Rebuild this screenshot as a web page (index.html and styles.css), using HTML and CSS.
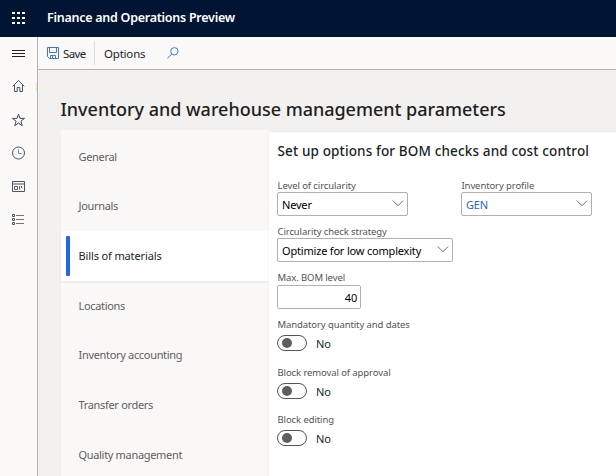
FILE: index.html
```
<!DOCTYPE html>
<html lang="en">
<head>
<meta charset="utf-8">
<title>Finance and Operations Preview</title>
<link rel="stylesheet" href="styles.css">
</head>
<body>
<header class="topbar">
  <svg class="waffle" width="14" height="14" viewBox="0 0 14 14" fill="#fff"><path d="M0 1h3v2H0zM5 1h3v2H5zM10 1h3v2h-3zM0 6h3v2H0zM5 6h3v2H5zM10 6h3v2h-3zM0 11h3v2H0zM5 11h3v2H5zM10 11h3v2h-3z"/></svg>
  <span class="brand">Finance and Operations Preview</span>
</header>
<div class="shell">
  <nav class="rail">
    <svg class="menu" width="14" height="14" viewBox="0 0 14 14" fill="#222"><path d="M0 3h13v1H0zM0 6h13v1H0zM0 9h13v1H0z"/></svg>
    <svg width="14" height="14" viewBox="0 0 14 14" fill="none" stroke="#4b5563"><path d="M.7 7.300 6.500 1.500l5.800 5.800M2.500 6v6.500h2.700V8.500h2.600v4h2.700V6"/></svg>
    <svg width="14" height="14" viewBox="0 0 14 14" fill="none" stroke="#3f4855"><path d="m6.500 1.200 1.500 4.200h4.500L8.900 8.200l1.300 4.500-3.700-2.700-3.700 2.700 1.300-4.500L.5 5.400H5z"/></svg>
    <svg width="14" height="14" viewBox="0 0 14 14" fill="none" stroke="#4b5563"><circle cx="6.500" cy="7" r="6"/><path d="M6.500 3.500v4h3" stroke="#6f90ac"/></svg>
    <svg width="14" height="14" viewBox="0 0 14 14" fill="none" stroke="#4f5563"><path d="M.5 1.500h12v10H.5zM.5 4h12"/><path d="M2.500 6.500h3v3h-3zM7.500 6v3.500M9.500 6v2" stroke="#4d6380"/></svg>
    <svg width="14" height="14" viewBox="0 0 14 14"><path d="M.5 1.500h2v2h-2zM.5 5.500h2v2h-2zM.5 9.500h2v2h-2z" fill="none" stroke="#465569"/><path d="M4 2h8v1H4zM4 6h8v1H4zM4 10h8v1H4z" fill="#757575"/></svg>
  </nav>
  <main class="main">
    <div class="commands">
      <svg class="disk" width="12" height="12" viewBox="0 0 12 12" fill="none" stroke="#4475de"><path d="M.5.500h11v11h-9l-2-2zM2.500.500v5h7v-5M3.500 11.500v-3h5v3M5.500 9v2"/></svg>
      <span class="save">Save</span>
      <span class="divider"></span>
      <span class="options">Options</span>
      <svg class="search" width="12" height="12" viewBox="0 0 12 12" fill="none" stroke="#4475de"><circle cx="7.400" cy="4.300" r="3.700"/><path d="M4.700 7 .4 11.400"/></svg>
    </div>
    <h1 class="title">Inventory and warehouse management parameters</h1>
    <div class="workspace">
      <div class="tabs">
        <div class="tab">General</div>
        <div class="tab">Journals</div>
        <div class="tab selected">Bills of materials</div>
        <div class="tab">Locations</div>
        <div class="tab">Inventory accounting</div>
        <div class="tab">Transfer orders</div>
        <div class="tab">Quality management</div>
      </div>
      <section class="panel">
        <h2 class="heading">Set up options for BOM checks and cost control</h2>
        <div class="row">
          <div class="field"><label>Level of circularity</label><div class="input"><span>Never</span><svg class="chevron" width="12" height="7" viewBox="0 0 12 7"><path d="m.8.500 5.200 5.300L11.200.500"/></svg></div></div>
          <div class="field"><label>Inventory profile</label><div class="input link"><span>GEN</span><svg class="chevron" width="12" height="7" viewBox="0 0 12 7"><path d="m.8.500 5.200 5.300L11.200.500"/></svg></div></div>
        </div>
        <div class="field wide"><label>Circularity check strategy</label><div class="input"><span>Optimize for low complexity</span><svg class="chevron" width="12" height="7" viewBox="0 0 12 7"><path d="m.8.500 5.200 5.300L11.200.500"/></svg></div></div>
        <div class="field level"><label>Max. BOM level</label><div class="input number"><span>40</span></div></div>
        <div class="switch-field"><label>Mandatory quantity and dates</label><div class="switch"><span class="track"></span><span class="state">No</span></div></div>
        <div class="switch-field"><label>Block removal of approval</label><div class="switch"><span class="track"></span><span class="state">No</span></div></div>
        <div class="switch-field last"><label>Block editing</label><div class="switch"><span class="track"></span><span class="state">No</span></div></div>
      </section>
    </div>
  </main>
</div>
</body>
</html>
```
FILE: styles.css
```
* { box-sizing: border-box; }
body {
  margin: 0;
  width: 616px;
  height: 476px;
  overflow: hidden;
  background: #f2f1ef;
  color: #201f1e;
  font: 11px/16px "Noto Sans", "Open Sans", sans-serif;
}
svg { display: block; flex: none; }
.topbar {
  height: 37px;
  display: flex;
  align-items: center;
  padding: 0 0 1px 12px;
  background: #001433;
  color: #fff;
}
.brand { margin-left: 21px; font-size: 12.500px; font-weight: 600; letter-spacing: -.26px; white-space: nowrap; }
.shell { display: flex; height: 439px; }
.rail {
  position: relative;
  width: 38px;
  flex: none;
  display: flex;
  flex-direction: column;
  gap: 19.500px;
  padding: 10px 0 0 12px;
  background: #faf9f8;
  border-right: 1px solid #b5b3b1;
}
.rail::after {
  content: "";
  position: absolute;
  right: 0;
  top: 46px;
  width: 1px;
  height: 8px;
  background: #ffe2a0;
}
.menu { margin-bottom: -1.500px; }
.main { flex: 1; min-width: 0; }
.commands {
  height: 33px;
  display: flex;
  align-items: center;
  padding-left: 9px;
  background: #faf9f8;
  border-bottom: 1px solid #b5b3b1;
  white-space: nowrap;
}
.disk { margin-bottom: 1px; }
.save { width: 31px; margin: 2px 0 0 4px; font-size: 11.500px; letter-spacing: -.6px; }
.divider { width: 1px; height: 24px; background: #e1dfdd; }
.options { width: 50px; margin: 2px 0 0 9px; font-size: 11.500px; letter-spacing: -.2px; }
.search { margin-left: 13px; }
.title {
  margin: 0;
  padding: 26px 0 0 22.500px;
  height: 60px;
  font-size: 18px;
  line-height: 26px;
  font-weight: 500;
  letter-spacing: -.02px;
  white-space: nowrap;
}
.workspace { display: flex; height: 346px; padding-left: 23px; }
.tabs { width: 208px; flex: none; padding-top: 2px; background: #f9f8f7; }
.tab {
  height: 49.670px;
  display: flex;
  align-items: center;
  padding: 0 0 0 17.500px;
  color: #605e5c;
  letter-spacing: -.32px;
  white-space: nowrap;
}
.tab.selected {
  position: relative;
  background: #fff;
  color: #201f1e;
  letter-spacing: -.13px;
  box-shadow: 0 1px 2px #00000014;
}
.tab.selected::before {
  content: "";
  position: absolute;
  left: 5px;
  top: 5px;
  width: 4px;
  height: 40px;
  border-radius: 1px;
  background: #2266e3;
}
.panel {
  flex: 1;
  margin-top: 2px;
  padding: 9px 0 0 8px;
  background: #fff;
  box-shadow: 0 0 2px #00000018;
  clip-path: inset(-2px 0 0 -2px);
}
.heading { margin: 0 0 16px; padding-left: .5px; font-size: 13.500px; line-height: 20px; font-weight: 500; letter-spacing: .14px; white-space: nowrap; }
label {
  display: block;
  height: 15px;
  padding-left: .5px;
  font-size: 9.500px;
  line-height: 15px;
  letter-spacing: -.1px;
  color: #555351;
  white-space: nowrap;
}
.row { display: flex; gap: 53px; }
.field { width: 131px; height: 47px; }
.row .field { height: 46px; }
.row label { padding-top: .5px; }
.field.wide { width: 176px; }
.field.wide label { padding-top: .5px; }
.field.level { width: 84px; }
.input {
  height: 24px;
  display: flex;
  align-items: center;
  justify-content: space-between;
  padding: 0 3px 0 4px;
  border: 1px solid #b3b0ad;
  border-radius: 2px;
  color: #000;
  letter-spacing: -.19px;
  white-space: nowrap;
}
.input span { padding-top: 1px; }
.input.link { color: #2b62d9; }
.input.number { justify-content: flex-end; }
.chevron { margin-bottom: 2px; fill: none; stroke: #66737a; }
.switch-field { height: 48px; }
.switch-field.last { margin-top: -1px; }
.switch { display: flex; align-items: center; gap: 9px; height: 22px; }
.state { padding-top: 1px; }
.track {
  width: 30px;
  height: 16px;
  display: flex;
  align-items: center;
  padding-left: 4px;
  border: 1px solid #555351;
  border-radius: 8px;
}
.track::before { content: ""; width: 10px; height: 10px; border-radius: 50%; background: #605e5c; }
```
